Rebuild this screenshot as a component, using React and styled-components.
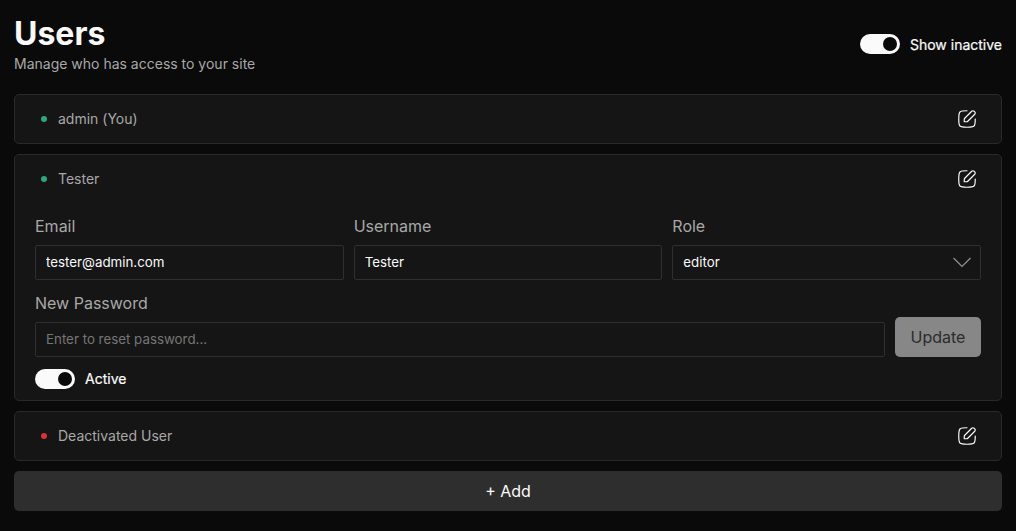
import React from "react";
import styled, { createGlobalStyle } from "styled-components";

const GlobalStyle = createGlobalStyle`
  *, *::before, *::after { box-sizing: border-box; }
  body { margin: 0; background: #0a0a0a; }
  body, button, input {
    font-family: Inter, "Liberation Sans", sans-serif;
  }
`;

const Page = styled.main`
  padding: 14px;
  color: #fafafa;
  font-size: 14px;
`;

const Header = styled.header`
  display: flex;
  justify-content: space-between;
  height: 60px;
  margin-bottom: 20px;
`;

const Title = styled.h1`
  margin: 0;
  font-size: 32px;
  line-height: 40px;
  font-weight: 700;
`;

const Subtitle = styled.p`
  margin: 0;
  color: #a8a8a8;
  line-height: 20px;
`;

const ToggleLabel = styled.label`
  display: flex;
  align-items: center;
  gap: 10px;
  height: 20px;
  margin-top: ${(p) => p.$top}px;
  font-size: 14px;
  font-weight: 400;
  line-height: 20px;
`;

const ToggleText = styled.span`
  padding-top: ${(p) => p.$drop || 0}px;
  -webkit-text-stroke: 0.2px currentColor;
`;

const Track = styled.span`
  display: flex;
  align-items: center;
  justify-content: flex-end;
  width: 40px;
  height: 20px;
  padding-right: 3px;
  border-radius: 10px;
  background: #fafafa;
`;

const Knob = styled.span`
  width: 14px;
  height: 14px;
  border-radius: 50%;
  background: #0a0a0a;
`;

const List = styled.div`
  display: flex;
  flex-direction: column;
  gap: 10px;
`;

const Card = styled.section`
  border: 1px solid #2a2a2a;
  border-radius: 5px;
  background: #151515;
`;

const CardHeader = styled.div`
  display: flex;
  align-items: center;
  height: 48px;
  padding: 0 23px 0 26px;
`;

const Dot = styled.span`
  width: 6px;
  height: 6px;
  margin-right: 11px;
  border-radius: 50%;
  background: ${(p) => (p.$active ? "#2ba882" : "#e03131")};
`;

const UserName = styled.span`
  flex: 1;
  color: #a8a8a8;
  line-height: 20px;
`;

const IconButton = styled.button`
  display: flex;
  padding: 0;
  border: 0;
  background: none;
  color: #fafafa;
`;

const Form = styled.div`
  padding: 13px 20px 11px;
`;

const FieldGrid = styled.div`
  display: grid;
  grid-template-columns: repeat(3, 1fr);
  gap: 10px;
`;

const PasswordRow = styled.div`
  display: flex;
  align-items: flex-end;
  gap: 10px;
  margin-top: 13px;
`;

const Field = styled.label`
  display: flex;
  flex: 1;
  flex-direction: column;
  gap: 9px;
  color: #a8a8a8;
  font-size: 16px;
  line-height: 20px;
`;

const Input = styled.input`
  width: 100%;
  height: 35px;
  padding: 0 10px 1px;
  border: 1px solid #2f2f2f;
  border-radius: 2px;
  background: #151515;
  color: #fafafa;
  font-size: 13.333px;
  &::placeholder { color: #757575; }
`;

const Select = styled.div`
  display: flex;
  align-items: center;
  justify-content: space-between;
  height: 35px;
  padding: 0 8px 1px 10px;
  border: 1px solid #2f2f2f;
  border-radius: 2px;
  color: #fafafa;
  font-size: 13.333px;
`;

const UpdateButton = styled.button`
  width: 86px;
  height: 40px;
  padding: 0;
  border: 0;
  border-radius: 5px;
  background: #878787;
  color: #2c2c2c;
  font-size: 16px;
`;

const AddButton = styled.button`
  height: 40px;
  border: 0;
  border-radius: 5px;
  background: #2e2e2e;
  color: #fafafa;
  font-size: 16px;
`;

function EditIcon() {
  return (
    <svg width="22" height="22" viewBox="0 0 24 24" fill="none" stroke="currentColor" strokeWidth="1.3" strokeLinecap="round" strokeLinejoin="round">
      <path d="M9.533 11.15A1.82 1.82 0 0 0 9 12.438V15h2.578c.483 0 .947-.192 1.289-.534l7.6-7.604a1.82 1.82 0 0 0 0-2.577l-.751-.751a1.82 1.82 0 0 0-2.578 0z" />
      <path d="M21 12c0 4.243 0 6.364-1.318 7.682S16.242 21 12 21s-6.364 0-7.682-1.318S3 16.242 3 12s0-6.364 1.318-7.682S7.758 3 12 3" />
    </svg>
  );
}

function ChevronIcon() {
  return (
    <svg width="20" height="20" viewBox="0 0 20 20" fill="none" stroke="#969696" strokeWidth="1.1">
      <path d="M1.500 6 10 14.500l8.500-8.500" />
    </svg>
  );
}

function Toggle({ label, top, drop }) {
  return (
    <ToggleLabel $top={top}>
      <Track><Knob /></Track>
      <ToggleText $drop={drop}>{label}</ToggleText>
    </ToggleLabel>
  );
}

function User({ name, active, children }) {
  return (
    <Card>
      <CardHeader>
        <Dot $active={active} />
        <UserName>{name}</UserName>
        <IconButton aria-label="Edit user"><EditIcon /></IconButton>
      </CardHeader>
      {children}
    </Card>
  );
}

export default function App() {
  return (
    <Page>
      <GlobalStyle />
      <Header>
        <div>
          <Title>Users</Title>
          <Subtitle>Manage who has access to your site</Subtitle>
        </div>
        <Toggle label="Show inactive" top={20} drop={2} />
      </Header>
      <List>
        <User name="admin (You)" active />
        <User name="Tester" active>
          <Form>
            <FieldGrid>
              <Field>Email<Input defaultValue="tester@admin.com" /></Field>
              <Field>Username<Input defaultValue="Tester" /></Field>
              <Field>Role<Select>editor<ChevronIcon /></Select></Field>
            </FieldGrid>
            <PasswordRow>
              <Field>New Password<Input type="password" placeholder="Enter to reset password..." /></Field>
              <UpdateButton>Update</UpdateButton>
            </PasswordRow>
            <Toggle label="Active" top={12} />
          </Form>
        </User>
        <User name="Deactivated User" />
        <AddButton>+ Add</AddButton>
      </List>
    </Page>
  );
}
